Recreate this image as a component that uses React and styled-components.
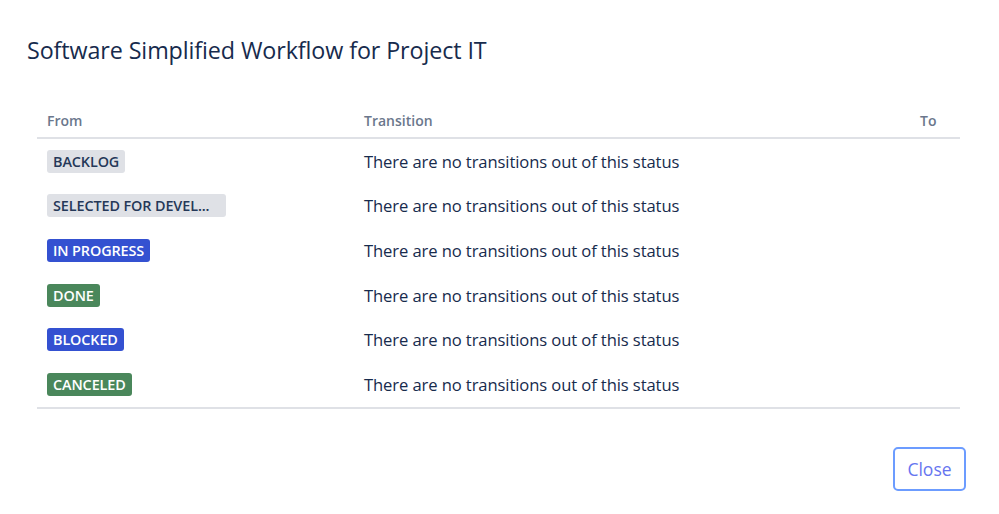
import React from "react";
import styled, { createGlobalStyle } from "styled-components";

const Global = createGlobalStyle`
  html, body { margin: 0; padding: 0; background: #fff; }
  body { font-family: "Open Sans", "Noto Sans", sans-serif; color: #172B4D; }
`;

const Dialog = styled.div`
  width: 999px;
  height: 514px;
  box-sizing: border-box;
  padding: 34px 39px 0 27px;
  display: flex;
  flex-direction: column;
`;

const Title = styled.h1`
  margin: 0;
  font-size: 23.3px;
  font-weight: 400;
  line-height: 32px;
  color: #172B4D;
  letter-spacing: -0.1px;
`;

const Table = styled.div`
  margin: 39px 0 0 10px;
  display: flex;
  flex-direction: column;
  border-bottom: 2px solid #DFE1E6;
`;

const Row = styled.div`
  display: grid;
  grid-template-columns: 317px 1fr 40px;
  align-items: center;
  padding-left: 10px;
  height: ${(p) => (p.$head ? "32px" : "44.6px")};
  ${(p) => p.$head && "border-bottom: 2px solid #DFE1E6; align-items: start;"}
`;

const HeadCell = styled.div`
  font-size: 14px;
  font-weight: 600;
  color: #6B778C;
  padding-top: 6px;
`;

const Cell = styled.div`
  font-size: 16.6px;
  color: #172B4D;
  letter-spacing: -0.1px;
`;

const palette = {
  gray: { bg: "#DFE1E6", fg: "#253858" },
  blue: { bg: "#3451D1", fg: "#ffffff" },
  green: { bg: "#4A875B", fg: "#ffffff" },
};

const Lozenge = styled.span`
  display: inline-flex;
  align-items: center;
  height: 23px;
  padding: 0 6px;
  border-radius: 3px;
  font-size: 14.4px;
  font-weight: 600;
  letter-spacing: -0.1px;
  background: ${(p) => palette[p.$tone].bg};
  color: ${(p) => palette[p.$tone].fg};
  box-sizing: border-box;
  ${(p) => p.$wide && "width: 179px;"}
`;

const Footer = styled.div`
  display: flex;
  justify-content: flex-end;
  margin: 38px -6px 0 0;
`;

const CloseButton = styled.button`
  width: 73px;
  height: 44px;
  border: 2px solid #6C9CFF;
  border-radius: 5px;
  background: #fff;
  color: #6675F0;
  font-family: "Open Sans", "Noto Sans", sans-serif;
  font-size: 17.5px;
  padding: 0;
  cursor: pointer;
`;

const rows = [
  { name: "BACKLOG", tone: "gray" },
  { name: "SELECTED FOR DEVEL...", tone: "gray", wide: true },
  { name: "IN PROGRESS", tone: "blue" },
  { name: "DONE", tone: "green" },
  { name: "BLOCKED", tone: "blue" },
  { name: "CANCELED", tone: "green" },
];

export default function App() {
  return (
    <>
      <Global />
      <Dialog>
        <Title>Software Simplified Workflow for Project IT</Title>
        <Table>
          <Row $head>
            <HeadCell>From</HeadCell>
            <HeadCell>Transition</HeadCell>
            <HeadCell>To</HeadCell>
          </Row>
          {rows.map((r) => (
            <Row key={r.name}>
              <div>
                <Lozenge $tone={r.tone} $wide={r.wide}>{r.name}</Lozenge>
              </div>
              <Cell>There are no transitions out of this status</Cell>
              <div />
            </Row>
          ))}
        </Table>
        <Footer>
          <CloseButton>Close</CloseButton>
        </Footer>
      </Dialog>
    </>
  );
}
